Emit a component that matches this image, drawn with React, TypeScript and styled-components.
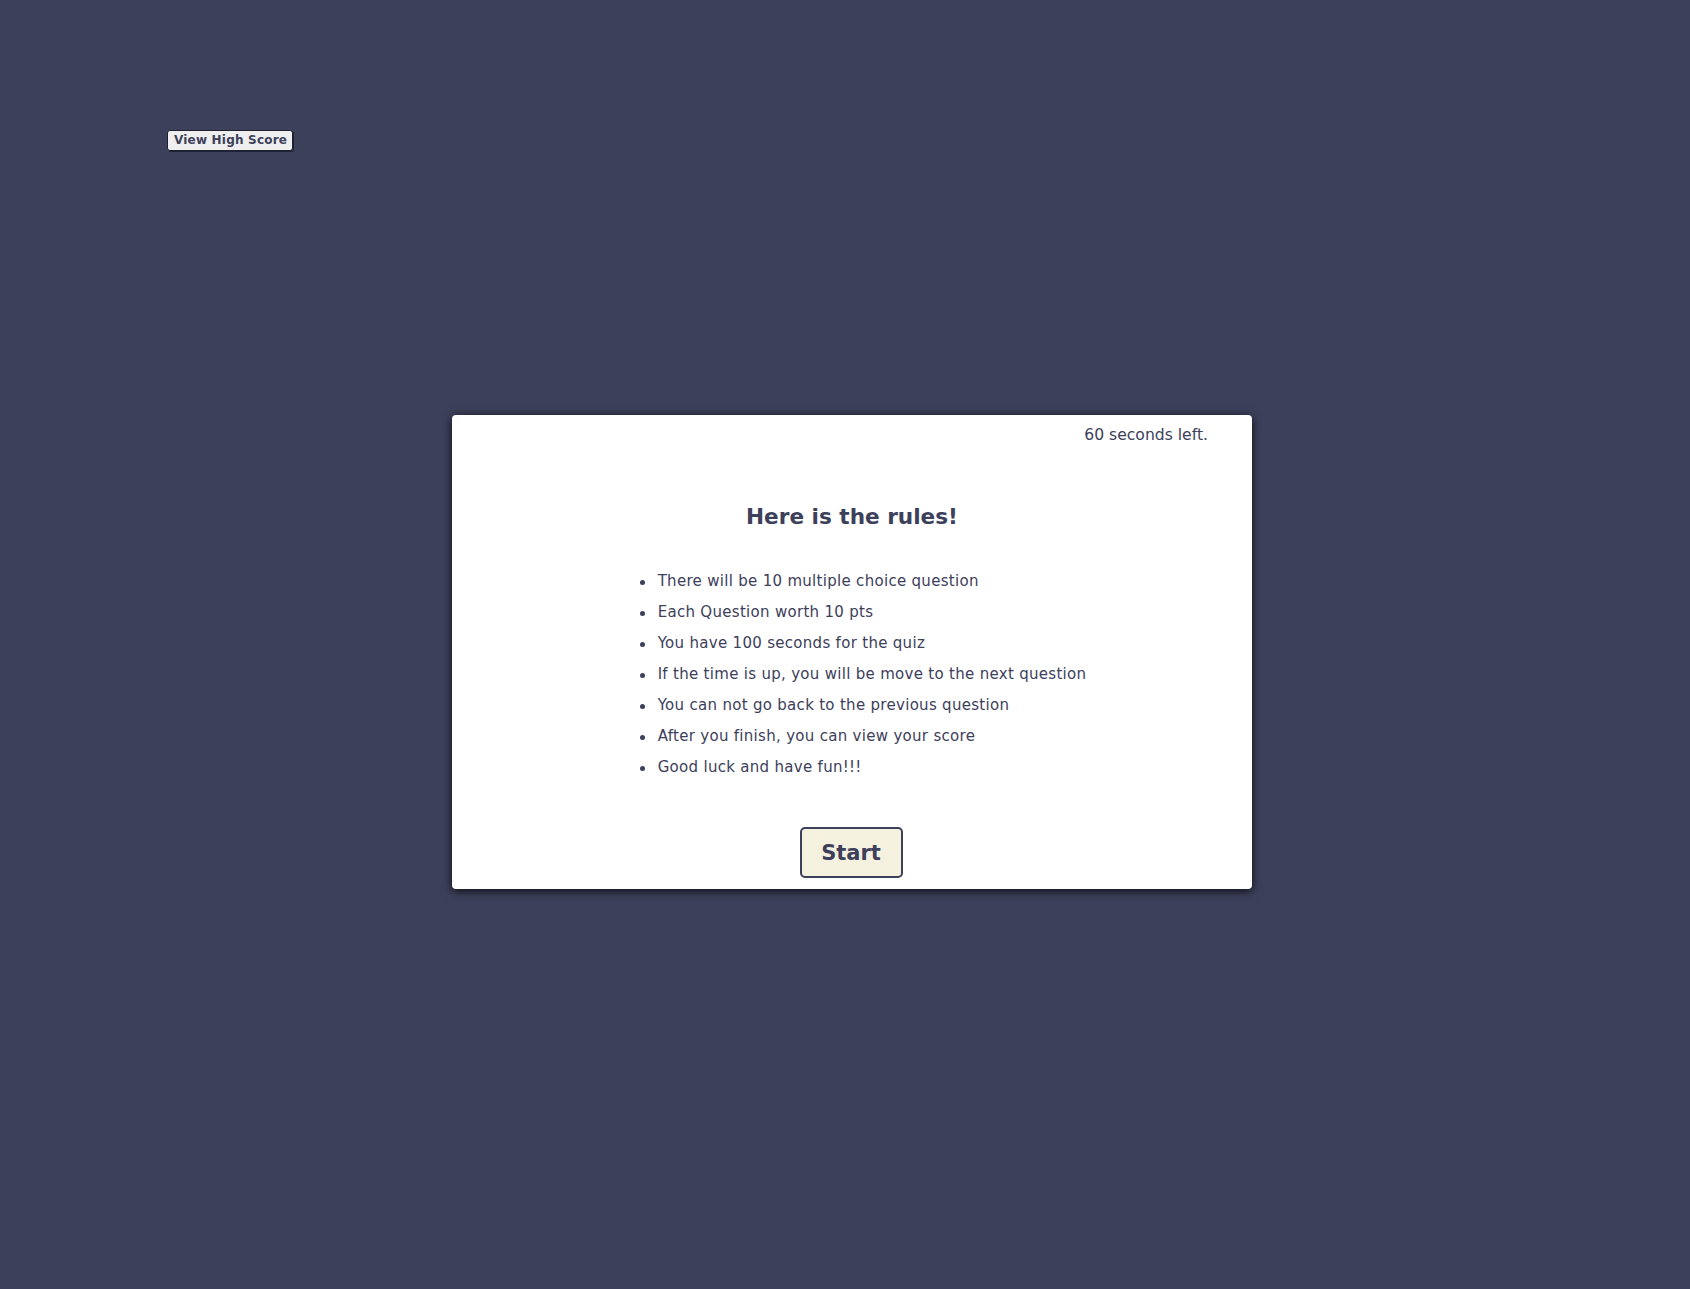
import React from "react";
import styled, { createGlobalStyle } from "styled-components";

const GlobalStyle = createGlobalStyle`
  html, body {
    margin: 0;
    padding: 0;
    background: #3d405b;
  }
  body {
    font-family: "DejaVu Sans", "Liberation Sans", sans-serif;
    color: #3d405b;
    min-height: 1289px;
  }
`;

const Page = styled.div`
  display: flex;
  flex-direction: column;
  min-height: 1289px;
  background: #3d405b;
`;

const Header = styled.header`
  display: flex;
  padding: 130px 0 0 167px;
`;

const HighScoreButton = styled.button`
  font-family: "DejaVu Sans", sans-serif;
  font-weight: bold;
  font-size: 12px;
  letter-spacing: 0.2px;
  line-height: 15px;
  color: #3d405b;
  background: #efefef;
  border: 1px solid #1f2033;
  border-radius: 3px;
  box-shadow: 1px 1px 0 #1f2033;
  padding: 2px 6px;
  width: 126px;
  height: 21px;
  cursor: pointer;
  white-space: nowrap;
`;

const Stage = styled.main`
  display: flex;
  justify-content: center;
  padding-left: 14px;
  margin-top: 264px;
`;

const Card = styled.section`
  width: 800px;
  box-sizing: border-box;
  background: #ffffff;
  border-radius: 4px;
  box-shadow: 0 2px 10px rgba(0, 0, 0, 0.85);
  padding: 10px 44px 11px 40px;
  display: flex;
  flex-direction: column;
  align-items: center;
`;

const Timer = styled.div`
  align-self: stretch;
  text-align: right;
  font-size: 15.6px;
  line-height: 20px;
`;

const Title = styled.h1`
  margin: 57px 0 0 4px;
  font-size: 21.6px;
  line-height: 30px;
  font-weight: bold;
`;

const Rules = styled.ul`
  margin: 34px 0 0 4px;
  padding: 0 0 0 40px;
  list-style: none;
  font-size: 15px;
  letter-spacing: 0.3px;
  line-height: 31px;
`;

const Rule = styled.li`
  position: relative;
  &::before {
    content: "";
    position: absolute;
    left: -18px;
    top: 14px;
    width: 5px;
    height: 5px;
    border-radius: 50%;
    background: #3d405b;
  }
`;

const StartButton = styled.button`
  margin: 44px 0 0 2px;
  width: 103px;
  height: 51px;
  box-sizing: border-box;
  background: #f4f1de;
  border: 2px solid #3d405b;
  border-radius: 5px;
  font-family: "DejaVu Sans", sans-serif;
  font-weight: bold;
  font-size: 21px;
  color: #3d405b;
  cursor: pointer;
  padding: 0;
`;

const rules = [
  "There will be 10 multiple choice question",
  "Each Question worth 10 pts",
  "You have 100 seconds for the quiz",
  "If the time is up, you will be move to the next question",
  "You can not go back to the previous question",
  "After you finish, you can view your score",
  "Good luck and have fun!!!",
];

export default function App() {
  return (
    <>
      <GlobalStyle />
      <Page>
        <Header>
          <HighScoreButton>View High Score</HighScoreButton>
        </Header>
        <Stage>
          <Card>
            <Timer>60 seconds left.</Timer>
            <Title>Here is the rules!</Title>
            <Rules>
              {rules.map((r) => (
                <Rule key={r}>{r}</Rule>
              ))}
            </Rules>
            <StartButton>Start</StartButton>
          </Card>
        </Stage>
      </Page>
    </>
  );
}
